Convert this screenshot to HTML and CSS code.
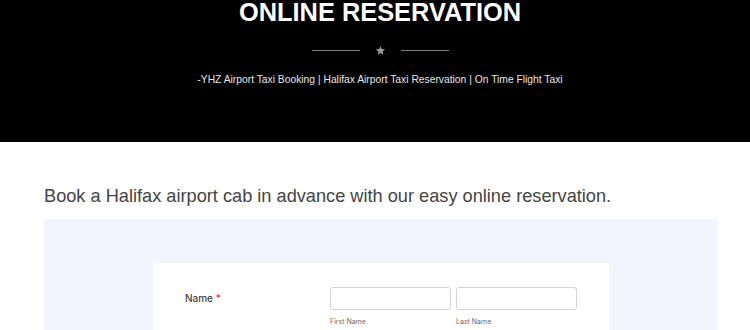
FILE: index.html
```html
<!DOCTYPE html>
<html lang="en">
<head>
    <meta charset="UTF-8">
    <meta name="viewport" content="width=device-width, initial-scale=1.0">
    <title>Online Reservation</title>
    <link rel="stylesheet" href="styles.css">
</head>
<body>
    <!-- Page banner -->
    <header class="hero">
        <h1 class="hero-title">ONLINE RESERVATION</h1>
        <div class="divider">
            <span class="divider-line"></span>
            <svg class="divider-star" viewBox="0 0 24 24">
                <polygon points="12,2 14.9,8.6 22,9.3 16.6,14 18.2,21 12,17.3 5.8,21 7.4,14 2,9.3 9.1,8.6"/>
            </svg>
            <span class="divider-line"></span>
        </div>
        <p class="hero-sub">-YHZ Airport Taxi Booking | Halifax Airport Taxi Reservation | On Time Flight Taxi</p>
    </header>

    <main class="content">
        <h2 class="intro">Book a Halifax airport cab in advance with our easy online reservation.</h2>

        <div class="form-wrap">
            <form class="form-card">
                <div class="form-row">
                    <label class="form-label">Name <span class="req">*</span></label>
                    <div class="field-group">
                        <div class="field">
                            <input type="text" class="input">
                            <span class="sublabel">First Name</span>
                        </div>
                        <div class="field">
                            <input type="text" class="input">
                            <span class="sublabel">Last Name</span>
                        </div>
                    </div>
                </div>
            </form>
        </div>
    </main>
</body>
</html>
```

FILE: styles.css
```css
body {
    margin: 0;
    font-family: "Liberation Sans", Arial, sans-serif;
    background-color: #fff;
}
.hero {
    background-color: #000;
    height: 142px;
    padding-left: 10px;
    text-align: center;
    overflow: hidden;
}
.hero-title {
    margin: 0;
    font-size: 25.4px;
    line-height: 25px;
    font-weight: bold;
    color: #fff;
}
.divider {
    display: flex;
    justify-content: center;
    align-items: center;
    gap: 15px;
    margin-top: 20px;
}
.divider-line {
    width: 48px;
    height: 1px;
    background-color: #777;
}
.divider-star {
    width: 11px;
    height: 11px;
    fill: #999;
}
.hero-sub {
    margin: 18px 0 0;
    font-size: 10.3px;
    color: #e6e6e6;
}
.content {
    padding: 0 32px 0 44px;
}
.intro {
    margin: 43px 0 0;
    font-size: 18.2px;
    font-weight: normal;
    line-height: 22px;
    color: #444;
}
.form-wrap {
    margin-top: 12px;
    background-color: #f4f4fe;
    padding: 44px 109px 0;
    height: 100px;
}
.form-card {
    background-color: #fff;
    border-radius: 3px;
    padding: 24px 32px 20px;
    font-family: Inter, "Noto Sans", sans-serif;
}
.form-row {
    display: flex;
}
.form-label {
    width: 145px;
    padding-top: 5px;
    font-size: 10px;
    font-weight: 500;
    color: #444;
}
.req {
    color: #e03c3c;
}
.field-group {
    display: flex;
    gap: 5px;
}
.field {
    display: flex;
    flex-direction: column;
}
.input {
    box-sizing: border-box;
    width: 121px;
    height: 23px;
    margin: 0;
    border: 1px solid #d4d4d8;
    border-radius: 3px;
    background-color: #fff;
}
.sublabel {
    margin-top: 7px;
    font-size: 7px;
    color: #6b6b70;
}
```
